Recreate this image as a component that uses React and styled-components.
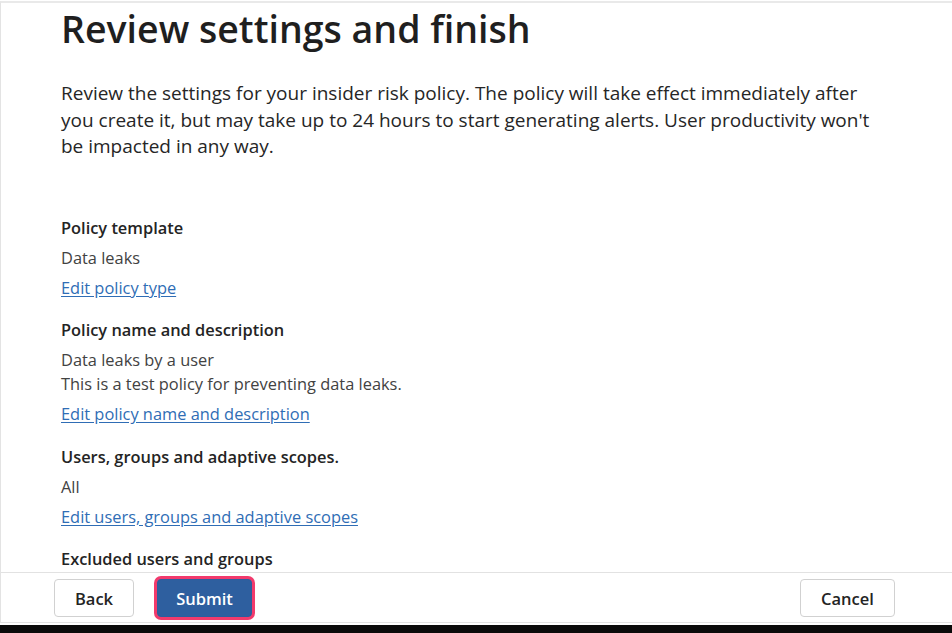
import React from "react";
import styled, {createGlobalStyle} from "styled-components";

const GlobalStyle = createGlobalStyle`
  html, body {
    margin: 0;
    padding: 0;
    background: #ffffff;
  }
  body {
    font-family: "Open Sans", "Noto Sans", sans-serif;
    color: #242424;
  }
`;

const Frame = styled.div`
  height: 633px;
  display: flex;
  flex-direction: column;
  box-sizing: border-box;
  padding-top: 1px;
  background: #ffffff;
`;

const Panel = styled.div`
  flex: 1;
  display: flex;
  flex-direction: column;
  min-height: 0;
  border-top: 2px solid #e9e9e9;
  border-left: 1px solid #e3e3e3;
`;

const Content = styled.div`
  flex: 1;
  min-height: 0;
  overflow: hidden;
  padding: 0 60px;
`;

const Title = styled.h1`
  margin: 0;
  padding-top: 2px;
  font-size: 37.5px;
  line-height: 48px;
  font-weight: 600;
  color: #1f1f1f;
`;

const Intro = styled.p`
  margin: 27px 0 0;
  font-size: 19px;
  line-height: 26.5px;
  color: #262626;
  white-space: nowrap;
`;

const SectionList = styled.div`
  margin-top: 53px;
  display: flex;
  flex-direction: column;
  gap: 12.5px;
`;

const Section = styled.section`
  display: flex;
  flex-direction: column;
  font-size: 16.4px;
`;

const Heading = styled.h3`
  margin: 3px 0;
  font-size: inherit;
  line-height: 24px;
  font-weight: 600;
  color: #242424;
`;

const Values = styled.div`
  margin: 3px 0;
  line-height: 24px;
  color: #424242;
`;

const EditLink = styled.a`
  line-height: 30px;
  color: #2f6db5;
  text-decoration: underline;
  text-underline-offset: 2px;
  align-self: flex-start;
  cursor: pointer;
`;

const Footer = styled.div`
  height: 43px;
  border-top: 1px solid #e2e2e2;
  border-bottom: 1px solid #e2e2e2;
  display: flex;
  align-items: flex-start;
  padding: 6px 57px 0 53px;
  gap: 23px;
`;

const Spacer = styled.div`
  flex: 1;
`;

const Button = styled.button`
  height: 38px;
  min-width: ${(p) => p.width}px;
  padding: 0 18px;
  border-radius: 4px;
  font-family: inherit;
  font-size: 16.5px;
  font-weight: 600;
  cursor: pointer;
  border: 1px solid ${(p) => (p.primary ? "#2c5e9e" : "#d1d1d1")};
  background: ${(p) => (p.primary ? "#2e5f9f" : "#ffffff")};
  color: ${(p) => (p.primary ? "#ffffff" : "#242424")};
  box-shadow: ${(p) => (p.focused ? "0 0 0 3px #f23a6c" : "none")};
`;

const BottomBar = styled.div`
  margin-top: 2px;
  height: 8px;
  background: #0a0a0a;
`;

const sections = [
  {
    title: "Policy template",
    values: ["Data leaks"],
    link: "Edit policy type",
  },
  {
    title: "Policy name and description",
    values: ["Data leaks by a user", "This is a test policy for preventing data leaks."],
    link: "Edit policy name and description",
  },
  {
    title: "Users, groups and adaptive scopes.",
    values: ["All"],
    link: "Edit users, groups and adaptive scopes",
  },
  {
    title: "Excluded users and groups",
  },
];

const App = () => {
  return (
    <Frame>
      <GlobalStyle/>
      <Panel>
        <Content>
          <Title>Review settings and finish</Title>
          <Intro>
            Review the settings for your insider risk policy. The policy will take effect immediately after
            <br/>
            you create it, but may take up to 24 hours to start generating alerts. User productivity won't
            <br/>
            be impacted in any way.
          </Intro>
          <SectionList>
            {sections.map((s) => (
              <Section key={s.title}>
                <Heading>{s.title}</Heading>
                {s.values && (
                  <Values>
                    {s.values.map((v) => (
                      <div key={v}>{v}</div>
                    ))}
                  </Values>
                )}
                {s.link && <EditLink>{s.link}</EditLink>}
              </Section>
            ))}
          </SectionList>
        </Content>
        <Footer>
          <Button width={80}>Back</Button>
          <Button width={95} primary focused>Submit</Button>
          <Spacer/>
          <Button width={95}>Cancel</Button>
        </Footer>
      </Panel>
      <BottomBar/>
    </Frame>
  );
};

export default App;
